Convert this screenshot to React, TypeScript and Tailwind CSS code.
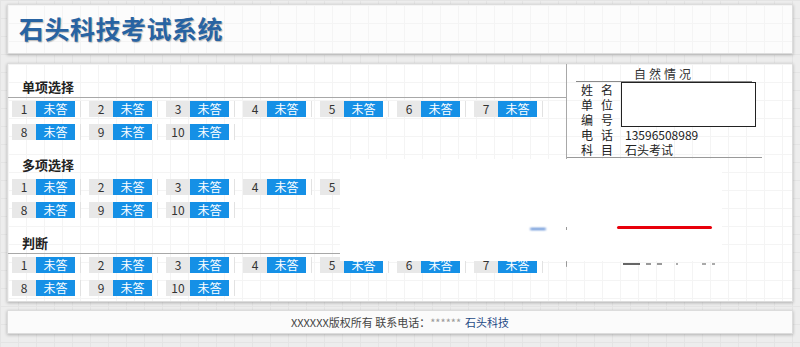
import React from "react";

const font = { fontFamily: '"Noto Sans CJK SC", "Noto Sans", sans-serif' };

type Section = { title: string; count: number; line: boolean };

const sections: Section[] = [
  { title: "单项选择", count: 10, line: true },
  { title: "多项选择", count: 10, line: false },
  { title: "判断", count: 10, line: true },
];

function Item({ n }: { n: number }) {
  return (
    <div className="mr-[8px] flex h-4 w-[69px] border-r border-[#e2e2e2] bg-white">
      <span className="flex w-6 items-center justify-center bg-[#e8e8e8] text-[12px] leading-4 text-[#333]">
        {n}
      </span>
      <span className="flex w-[39px] items-center justify-center bg-[#1590e6] text-[12px] leading-4 text-white">
        未答
      </span>
    </div>
  );
}

function QuestionSection({ s, first }: { s: Section; first: boolean }) {
  return (
    <div className={first ? "" : "mt-[15px]"}>
      <div
        className={`h-[21px] border-b pl-[14px] text-[13px] font-bold leading-[20px] text-[#222] ${
          s.line ? "border-[#a8a8a8]" : "border-transparent"
        }`}
      >
        {s.title}
      </div>
      <div className="mt-[3px] flex flex-wrap gap-y-[7px] pl-[4px]">
        {Array.from({ length: s.count }, (_, i) => (
          <Item key={i} n={i + 1} />
        ))}
      </div>
    </div>
  );
}

const info: [string, string, string][] = [
  ["姓", "名", ""],
  ["单", "位", ""],
  ["编", "号", ""],
  ["电", "话", "13596508989"],
  ["科", "目", "石头考试"],
];

function InfoPanel() {
  return (
    <div className="h-[203px] w-[196px] shrink-0 border-l border-[#a8a8a8]">
      <div className="mx-[9px] mt-[2px] mr-[10px] h-[16px] border-b border-[#8a8a8a] text-center text-[12px] leading-[15px] tracking-[3px] text-[#333]">
        自然情况
      </div>
      <div className="flex border-b border-[#999] pl-[14px] text-[12px] leading-none text-[#222]">
        <div className="w-[40px]">
          {info.map(([a, b]) => (
            <div key={a} className="flex h-[15px] w-[32px] items-center justify-between">
              <span>{a}</span>
              <span>{b}</span>
            </div>
          ))}
        </div>
        <div className="flex flex-col">
          <div className="h-[45px] w-[135px] border-[1.5px] border-[#222] bg-white" />
          <div className="flex h-[15px] items-center pl-[4px]">{info[3][2]}</div>
          <div className="flex h-[15px] items-center pl-[4px]">{info[4][2]}</div>
        </div>
      </div>
    </div>
  );
}

export default function App() {
  const grid =
    "bg-[linear-gradient(#e4e4e4_1px,transparent_1px),linear-gradient(90deg,#e4e4e4_1px,transparent_1px)] bg-[size:18px_18px]";
  const faint =
    "bg-[linear-gradient(#f4f4f4_1px,transparent_1px),linear-gradient(90deg,#f4f4f4_1px,transparent_1px)] bg-[size:18px_18px]";
  return (
    <div
      style={font}
      className={`flex h-[347px] w-[800px] flex-col bg-[#ededed] px-[7px] pt-[4px] ${grid}`}
    >
      <div
        className={`flex h-[50px] items-center border border-[#dcdcdc] bg-[#fcfcfc] pl-[11px] shadow-[0_1px_3px_rgba(0,0,0,0.25)] ${faint}`}
      >
        <h1 className="text-[25px] font-bold tracking-[0.5px] text-[#2863a2] [text-shadow:1px_1px_1px_rgba(0,0,0,0.25)]">
          石头科技考试系统
        </h1>
      </div>

      <div
        className={`relative mt-[9px] flex h-[239px] border border-[#dcdcdc] bg-white shadow-[0_1px_3px_rgba(0,0,0,0.25)] ${faint}`}
      >
        <div className="w-[558px] shrink-0 pt-[13px]">
          {sections.map((s, i) => (
            <QuestionSection key={s.title} s={s} first={i === 0} />
          ))}
        </div>
        <InfoPanel />

        {/* white block lying over the page */}
        <div className="absolute left-[332px] top-[95px] h-[102px] w-[382px] bg-white">
          <div className="absolute left-[190px] top-[69px] h-[2px] w-[16px] rounded-full bg-[#4a7fd0] blur-[1px]" />
          <div className="absolute left-[226px] top-[68px] h-[3px] w-[1px] bg-[#999]" />
          <div className="absolute left-[277px] top-[67px] h-[3px] w-[95px] rounded-full bg-[#e8000b]" />
        </div>
        <div className="absolute left-[558px] top-[198px] h-[4px] w-[1px] bg-[#999]" />
        <div className="absolute left-[615px] top-[199px] flex items-center gap-[6px]">
          <span className="h-[2px] w-[17px] bg-[#666]" />
          <span className="h-[2px] w-[5px] bg-[#999]" />
          <span className="h-[2px] w-[5px] bg-[#999]" />
          <span className="ml-[8px] h-[2px] w-[2px] bg-[#aaa]" />
          <span className="ml-[18px] h-[2px] w-[4px] bg-[#aaa]" />
          <span className="h-[2px] w-[3px] bg-[#aaa]" />
        </div>
      </div>

      <div className="mt-[8px] flex h-[24px] items-center justify-center border border-[#dcdcdc] bg-[#fbfbfb] text-[11px] text-[#444] shadow-[0_1px_3px_rgba(0,0,0,0.25)]">
        <span>XXXXXX版权所有 联系电话：</span>
        <span className="text-[#999]">******</span>
        <span className="ml-[4px] text-[#1f4a86]">石头科技</span>
      </div>
    </div>
  );
}
